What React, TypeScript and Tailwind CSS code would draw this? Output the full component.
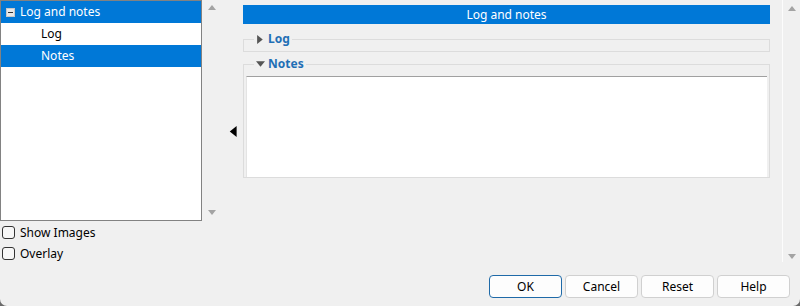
import type { ReactNode } from 'react'

const font = { fontFamily: '"Noto Sans", "Liberation Sans", sans-serif' }

function Tri({ dir, className, size = 8 }: { dir: 'up' | 'down' | 'left' | 'right'; className?: string; size?: number }) {
  const pts = {
    up: '0,6 4,1 8,6',
    down: '0,1 4,6 8,1',
    left: '7,0 2,4 7,8',
    right: '1,0 6,4 1,8',
  }[dir]
  return (
    <svg width={size} height={size} viewBox="0 0 8 8" className={className}>
      <polygon points={pts} fill="currentColor" />
    </svg>
  )
}

function Checkbox({ label }: { label: string }) {
  return (
    <label className="flex items-center gap-[5px] h-[21px] pl-[2px]">
      <span className="w-[13px] h-[13px] rounded-[3px] border border-[#333] bg-[#f7f7f7]" />
      <span className="text-[12px] text-black">{label}</span>
    </label>
  )
}

function Group({ label, open, children }: { label: string; open: boolean; children: ReactNode }) {
  return (
    <fieldset className="border border-[#dcdcdc] px-[2px] m-0">
      <legend className="ml-[8px] px-[2px] flex items-center gap-[3px] h-[14px] text-[12px] font-bold text-[#1f6fb5] leading-none">
        <Tri dir={open ? 'down' : 'right'} size={9} className="text-[#555]" />
        {label}
      </legend>
      {children}
    </fieldset>
  )
}

function Btn({ label, primary }: { label: string; primary?: boolean }) {
  return (
    <button
      className={`w-[73px] h-[23px] rounded-[4px] border bg-[#fdfdfd] text-[12px] text-black ${
        primary ? 'border-[#1f6aa8]' : 'border-[#d0d0d0]'
      }`}
    >
      {label}
    </button>
  )
}

export default function App() {
  return (
    <div className="w-[800px] h-[306px] bg-[#6b6b6b]" style={font}>
      <div className="w-full h-full bg-[#f0f0f0] rounded-b-[7px] flex flex-col">
        <div className="flex h-[266px] shrink-0">
          {/* Left tree */}
          <div className="w-[202px] flex flex-col">
            <div className="h-[221px] shrink-0 border border-[#828282] bg-white text-[12px]">
              <div className="h-[22px] bg-[#0078d7] text-white flex items-center pl-[5px] gap-[5px]">
                <span className="w-[9px] h-[9px] bg-[#e8e8e8] border border-[#c8c8c8] flex items-center justify-center">
                  <span className="w-[5px] h-[1px] bg-[#333]" />
                </span>
                Log and notes
              </div>
              <div className="h-[22px] flex items-center pl-[40px] text-black">Log</div>
              <div className="h-[22px] bg-[#0078d7] text-white flex items-center pl-[40px]">Notes</div>
            </div>
            <div className="pt-[1px]">
              <Checkbox label="Show Images" />
              <Checkbox label="Overlay" />
            </div>
          </div>

          {/* Left scrollbar */}
          <div className="w-[20px] h-[221px] flex flex-col justify-between items-center pt-[4px] pb-[4px] text-[#a3a3a3]">
            <Tri dir="up" />
            <Tri dir="down" />
          </div>

          {/* Splitter */}
          <div className="w-[21px] h-[262px] flex items-center justify-center">
            <Tri dir="left" size={11} className="text-black" />
          </div>

          {/* Right content */}
          <div className="w-[527px] pt-[5px] flex flex-col">
            <div className="h-[19px] bg-[#0078d7] text-white text-[12px] flex items-center justify-center">
              Log and notes
            </div>
            <div className="mt-[8px]">
              <Group label="Log" open={false}>
                <div className="h-[5px]" />
              </Group>
            </div>
            <div className="mt-[5px]">
              <Group label="Notes" open>
                <div className="mt-[5px] h-[101px] bg-white border-t border-l border-[#a0a0a0] border-l-[#e4e4e4]" />
              </Group>
            </div>
          </div>

          <div className="w-[12px]" />
          <div className="w-[1px] h-[262px] bg-[#fcfcfc]" />

          {/* Right scrollbar */}
          <div className="w-[17px] h-[262px] flex flex-col justify-between items-center pt-[5px] pb-[1px] text-[#a3a3a3]">
            <Tri dir="up" />
            <Tri dir="down" />
          </div>
        </div>

        {/* Buttons */}
        <div className="flex-1 flex justify-end items-start pt-[9px] pr-[10px] gap-[3px]">
          <Btn label="OK" primary />
          <Btn label="Cancel" />
          <Btn label="Reset" />
          <Btn label="Help" />
        </div>
      </div>
    </div>
  )
}
